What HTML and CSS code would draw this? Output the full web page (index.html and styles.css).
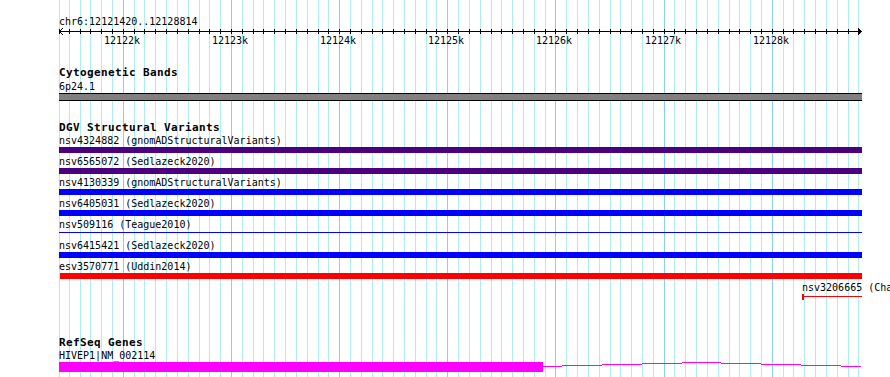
FILE: index.html
```html
<!DOCTYPE html>
<html>
<head>
<meta charset="utf-8">
<title>chr6:12121420..12128814</title>
<link rel="stylesheet" href="styles.css">
</head>
<body>
<div class="panel">
  <svg class="grid" width="890" height="377" viewBox="0 0 890 377" shape-rendering="crispEdges">
    <path class="minor" d="M59.5 0V377M69.5 0V377M80.5 0V377M90.5 0V377M101.5 0V377M112.5 0V377M134.5 0V377M144.5 0V377M155.5 0V377M166.5 0V377M177.5 0V377M188.5 0V377M199.5 0V377M209.5 0V377M220.5 0V377M242.5 0V377M253.5 0V377M263.5 0V377M274.5 0V377M285.5 0V377M296.5 0V377M307.5 0V377M318.5 0V377M328.5 0V377M350.5 0V377M361.5 0V377M372.5 0V377M382.5 0V377M393.5 0V377M404.5 0V377M415.5 0V377M426.5 0V377M436.5 0V377M458.5 0V377M469.5 0V377M480.5 0V377M491.5 0V377M501.5 0V377M512.5 0V377M523.5 0V377M534.5 0V377M545.5 0V377M566.5 0V377M577.5 0V377M588.5 0V377M599.5 0V377M610.5 0V377M620.5 0V377M631.5 0V377M642.5 0V377M653.5 0V377M674.5 0V377M685.5 0V377M696.5 0V377M707.5 0V377M718.5 0V377M729.5 0V377M739.5 0V377M750.5 0V377M761.5 0V377M783.5 0V377M793.5 0V377M804.5 0V377M815.5 0V377M826.5 0V377M837.5 0V377M848.5 0V377M858.5 0V377"/>
    <path class="major" d="M123.5 0V377M231.5 0V377M339.5 0V377M447.5 0V377M555.5 0V377M664.5 0V377M772.5 0V377"/>
  </svg>

  <div class="content">
    <div class="pos">chr6:12121420..12128814</div>
    <svg class="ruler" width="890" height="20" viewBox="0 0 890 20" shape-rendering="crispEdges">
      <rect x="59" y="3" width="803" height="1" fill="#000"/>
      <path class="ticks" d="M59.5 1v5M69.5 1v5M80.5 1v5M90.5 1v5M101.5 1v5M112.5 1v5M123.5 1v5M134.5 1v5M144.5 1v5M155.5 1v5M166.5 1v5M177.5 1v5M188.5 1v5M199.5 1v5M209.5 1v5M220.5 1v5M231.5 1v5M242.5 1v5M253.5 1v5M263.5 1v5M274.5 1v5M285.5 1v5M296.5 1v5M307.5 1v5M318.5 1v5M328.5 1v5M339.5 1v5M350.5 1v5M361.5 1v5M372.5 1v5M382.5 1v5M393.5 1v5M404.5 1v5M415.5 1v5M426.5 1v5M436.5 1v5M447.5 1v5M458.5 1v5M469.5 1v5M480.5 1v5M491.5 1v5M501.5 1v5M512.5 1v5M523.5 1v5M534.5 1v5M545.5 1v5M555.5 1v5M566.5 1v5M577.5 1v5M588.5 1v5M599.5 1v5M610.5 1v5M620.5 1v5M631.5 1v5M642.5 1v5M653.5 1v5M664.5 1v5M674.5 1v5M685.5 1v5M696.5 1v5M707.5 1v5M718.5 1v5M729.5 1v5M739.5 1v5M750.5 1v5M761.5 1v5M772.5 1v5M783.5 1v5M793.5 1v5M804.5 1v5M815.5 1v5M826.5 1v5M837.5 1v5M848.5 1v5M858.5 1v5"/>
      <path class="arrow" d="M63 0L60 3.5L63 7M858 0L861 3.5L858 7"/>
      <g class="scale-labels">
        <text x="122" y="16">12122k</text>
        <text x="230" y="16">12123k</text>
        <text x="338" y="16">12124k</text>
        <text x="446" y="16">12125k</text>
        <text x="554" y="16">12126k</text>
        <text x="663" y="16">12127k</text>
        <text x="771" y="16">12128k</text>
      </g>
    </svg>

    <section class="track track-bands">
      <h2 class="track-title">Cytogenetic Bands</h2>
      <div class="feature">
        <div class="flabel">6p24.1</div>
        <div class="band"></div>
      </div>
    </section>

    <section class="track track-dgv">
      <h2 class="track-title">DGV Structural Variants</h2>
      <div class="features">
        <div class="feature">
          <div class="flabel">nsv4324882 (gnomADStructuralVariants)</div>
          <div class="bar indigo"></div>
        </div>
        <div class="feature">
          <div class="flabel">nsv6565072 (Sedlazeck2020)</div>
          <div class="bar indigo"></div>
        </div>
        <div class="feature">
          <div class="flabel">nsv4130339 (gnomADStructuralVariants)</div>
          <div class="bar blue"></div>
        </div>
        <div class="feature">
          <div class="flabel">nsv6405031 (Sedlazeck2020)</div>
          <div class="bar blue"></div>
        </div>
        <div class="feature">
          <div class="flabel">nsv509116 (Teague2010)</div>
          <div class="bar thin-blue"></div>
        </div>
        <div class="feature">
          <div class="flabel">nsv6415421 (Sedlazeck2020)</div>
          <div class="bar blue"></div>
        </div>
        <div class="feature">
          <div class="flabel">esv3570771 (Uddin2014)</div>
          <div class="bar red"></div>
        </div>
        <div class="feature feature-right">
          <div class="flabel">nsv3206665 (Cha</div>
          <div class="span-red"></div>
        </div>
      </div>
    </section>

    <section class="track track-genes">
      <h2 class="track-title">RefSeq Genes</h2>
      <div class="feature">
        <div class="flabel">HIVEP1|NM_002114</div>
        <svg class="gene" width="890" height="10" viewBox="0 0 890 10" shape-rendering="crispEdges">
          <rect x="59" y="0" width="484" height="10"/>
          <rect x="543" y="4" width="19" height="1"/>
          <rect x="562" y="3" width="40" height="1"/>
          <rect x="602" y="2" width="40" height="1"/>
          <rect x="642" y="1" width="40" height="1"/>
          <rect x="682" y="0" width="39" height="1"/>
          <rect x="721" y="1" width="40" height="1"/>
          <rect x="761" y="2" width="40" height="1"/>
          <rect x="801" y="3" width="40" height="1"/>
          <rect x="841" y="4" width="20" height="1"/>
        </svg>
      </div>
    </section>
  </div>
</div>
</body>
</html>
```

FILE: styles.css
```css
html, body {
  margin: 0;
  padding: 0;
  background: #ffffff;
}

body {
  width: 890px;
  height: 377px;
  overflow: hidden;
}

.panel {
  position: relative;
  width: 890px;
  height: 377px;
  overflow: hidden;
  font-family: "DejaVu Sans Mono", monospace;
  font-size: 10px;
  line-height: 13px;
  color: #000;
}

.grid {
  position: absolute;
  left: 0;
  top: 0;
  z-index: 0;
}

.grid .minor {
  stroke: #aeeeee;
  stroke-width: 1;
  fill: none;
}

.grid .major {
  stroke: #87cefa;
  stroke-width: 1;
  fill: none;
}

.content {
  position: relative;
  z-index: 1;
}

.pos {
  margin: 15px 0 0 59px;
  height: 13px;
  white-space: nowrap;
}

.ruler {
  display: block;
}

.ruler .ticks,
.ruler .arrow {
  stroke: #000;
  stroke-width: 1;
  fill: none;
}

.scale-labels text {
  font-family: "DejaVu Sans Mono", monospace;
  font-size: 10px;
  text-anchor: middle;
  fill: #000;
}

.track-title {
  margin: 0 0 0 59px;
  font-size: 11px;
  font-weight: bold;
  letter-spacing: 0.38px;
  line-height: 12px;
  height: 12px;
  white-space: nowrap;
}

.track-bands {
  margin-top: 19px;
}

.track-bands .feature {
  margin-top: 1px;
}

.track-dgv {
  margin-top: 21px;
}

.track-genes {
  margin-top: 37px;
}

.features {
  display: flex;
  flex-direction: column;
  gap: 2px;
}

.flabel {
  margin-left: 59px;
  height: 13px;
  white-space: nowrap;
}

.band {
  margin-left: 59px;
  width: 803px;
  height: 6px;
  background: #808080;
  border-top: 1px solid #000;
  border-bottom: 1px solid #000;
}

.bar {
  margin-left: 59px;
  width: 803px;
  height: 6px;
}

.bar.indigo {
  background: #4b0082;
}

.bar.blue {
  background: #0000ff;
}

.bar.thin-blue {
  background: linear-gradient(#0000ff, #0000ff) 0 1px / 100% 1px no-repeat;
}

.bar.red {
  margin-left: 60px;
  width: 802px;
  background: #ff0000;
}

.feature-right .flabel {
  margin-left: 802px;
}

.span-red {
  box-sizing: border-box;
  margin-left: 802px;
  width: 60px;
  height: 6px;
  border-left: 2px solid #ff0000;
  background: linear-gradient(#ff0000, #ff0000) 0 2px / 100% 1px no-repeat;
}

.gene {
  display: block;
  fill: #ff00ff;
}
```
